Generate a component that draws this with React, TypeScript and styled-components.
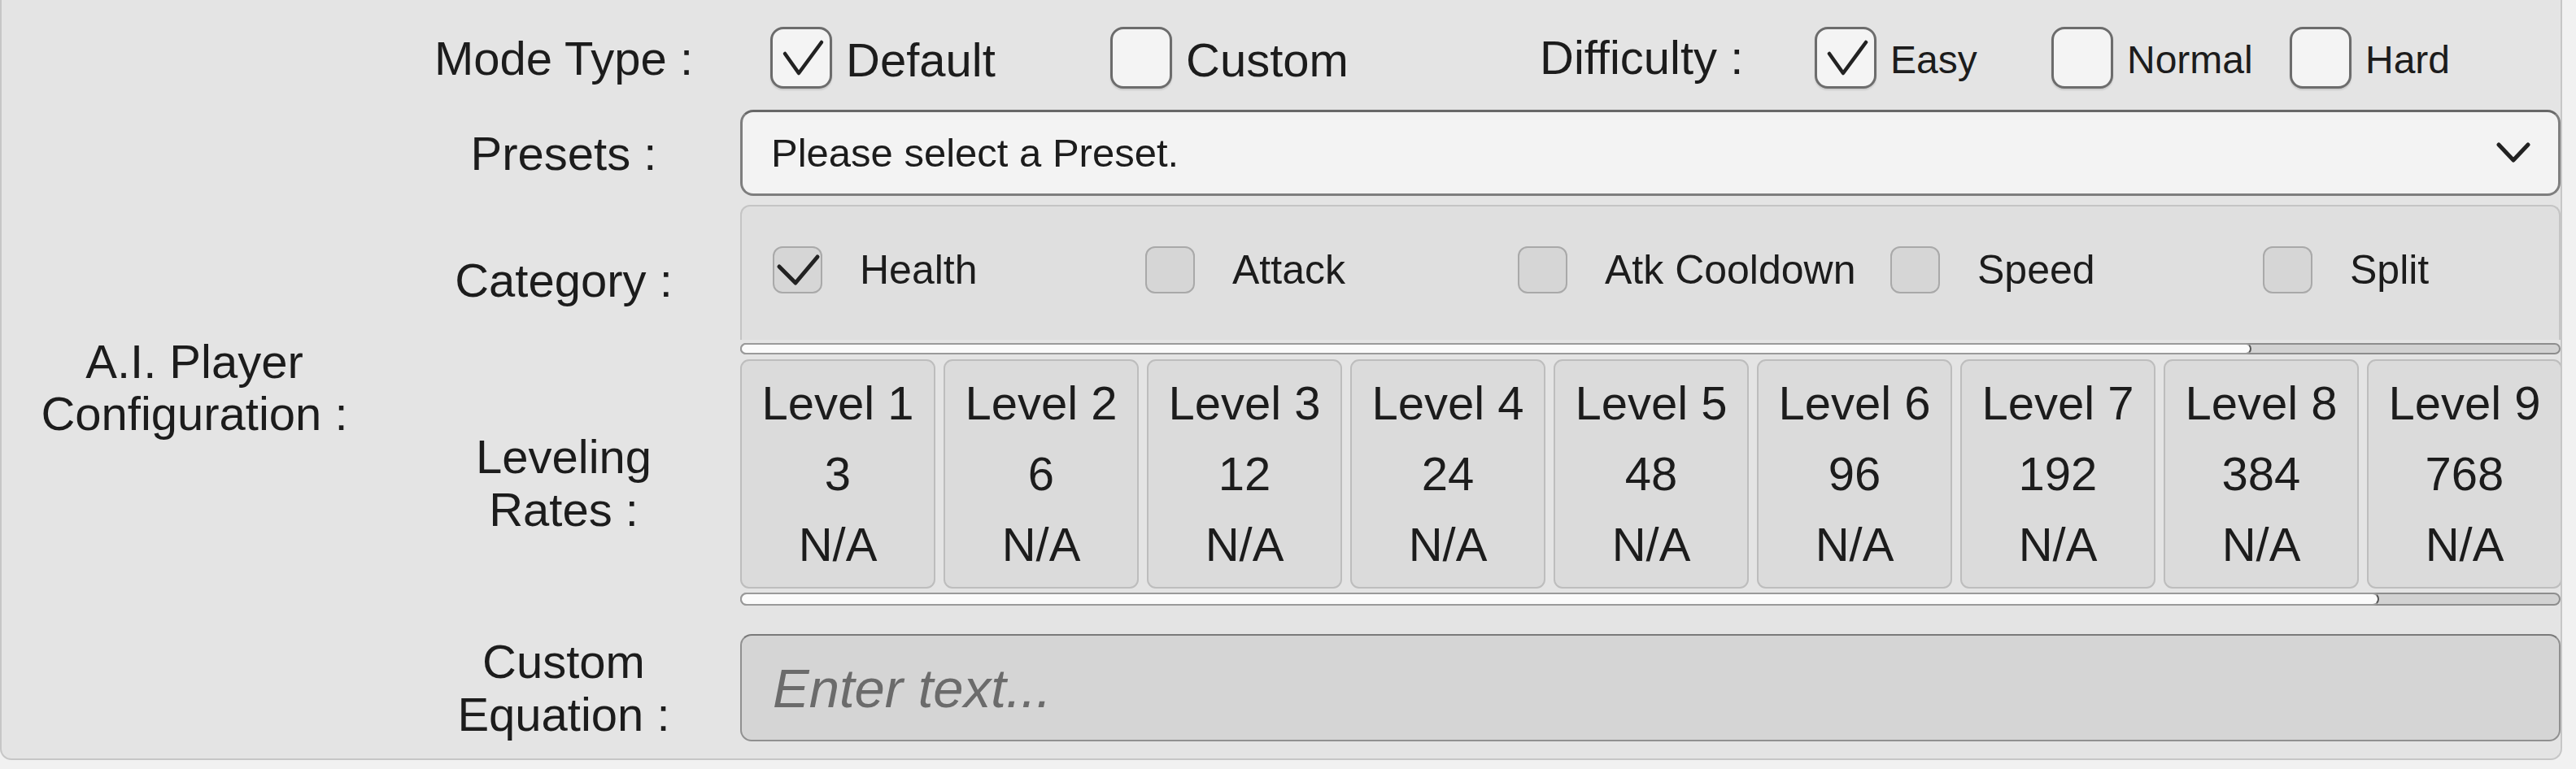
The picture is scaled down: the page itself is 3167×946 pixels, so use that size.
import React from 'react';
import styled, { createGlobalStyle } from 'styled-components';

const GlobalStyle = createGlobalStyle`
  html, body {
    margin: 0;
    padding: 0;
    background: #f1f1f1;
  }
  body {
    font-family: "Liberation Sans", Arial, sans-serif;
    color: #1c1c1c;
  }
`;

const Panel = styled.div`
  width: 3150px;
  box-sizing: border-box;
  display: flex;
  padding: 33px 0 21px 0;
  background: #e4e4e4;
  border: 2px solid #c6c6c6;
  border-top: none;
  border-radius: 0 0 14px 14px;
`;

const Title = styled.div`
  width: 474px;
  flex-shrink: 0;
  display: flex;
  align-items: center;
  justify-content: center;
  padding-top: 8px;
  text-align: center;
  font-size: 58px;
  line-height: 64px;
`;

const Rows = styled.div`
  flex: 1;
  display: flex;
  flex-direction: column;
  min-width: 0;
`;

const Row = styled.div<{ $top: number }>`
  display: grid;
  grid-template-columns: 434px minmax(0, 1fr);
  align-items: center;
  margin-top: ${p => p.$top}px;
`;

const RowLabel = styled.div`
  text-align: center;
  font-size: 58px;
  line-height: 65px;
`;

const ToggleRow = styled.div`
  display: flex;
  align-items: center;
  height: 76px;
  padding-left: 37px;
`;

const ToggleItem = styled.div<{ $w: number }>`
  width: ${p => p.$w}px;
  flex-shrink: 0;
  display: flex;
  align-items: center;
  gap: 17px;
`;

const ToggleText = styled.span<{ $size: number }>`
  font-size: ${p => p.$size}px;
  line-height: 1;
  padding-top: 6px;
`;

const BigBox = styled.div`
  width: 76px;
  height: 76px;
  box-sizing: border-box;
  flex-shrink: 0;
  border: 3px solid #6c6c6c;
  border-radius: 16px;
  background: #f4f4f4;
  box-shadow: 0 2px 2px rgba(0, 0, 0, 0.12);
  display: flex;
  align-items: center;
  justify-content: center;
`;

const InlineLabel = styled.div<{ $w: number }>`
  width: ${p => p.$w}px;
  flex-shrink: 0;
  font-size: 58px;
  line-height: 1;
`;

const Dropdown = styled.div`
  height: 106px;
  box-sizing: border-box;
  display: flex;
  align-items: center;
  justify-content: space-between;
  padding: 0 34px 0 35px;
  background: #f3f3f3;
  border: 3px solid #7e7e7e;
  border-top-color: #686868;
  border-radius: 16px;
  font-size: 49px;
`;

const ScrollView = styled.div<{ $gap: number }>`
  display: flex;
  flex-direction: column;
  gap: ${p => p.$gap}px;
  min-width: 0;
`;

const CategoryViewport = styled.div`
  height: 166px;
  box-sizing: border-box;
  overflow: hidden;
  background: #dfdfdf;
  border: 2px solid #c4c4c4;
  border-bottom: none;
  border-radius: 12px 12px 0 0;
`;

const CategoryList = styled.div`
  display: flex;
  padding: 49px 0 0 38px;
`;

const CategoryItem = styled.div`
  width: 458px;
  flex-shrink: 0;
  display: flex;
  align-items: center;
  gap: 46px;
  font-size: 50px;
  line-height: 1;
`;

const SmallBox = styled.div`
  width: 61px;
  height: 58px;
  box-sizing: border-box;
  flex-shrink: 0;
  background: #d6d6d6;
  border: 2px solid #a9a9a9;
  border-radius: 12px;
  display: flex;
  align-items: center;
  justify-content: center;
`;

const Track = styled.div<{ $h: number }>`
  height: ${p => p.$h}px;
  box-sizing: border-box;
  display: flex;
  background: #d2d2d2;
  border: 2px solid #8d8d8d;
  border-radius: 10px;
`;

const Thumb = styled.div<{ $fill: number }>`
  width: ${p => p.$fill * 100}%;
  margin: -2px 0 -2px -2px;
  background: #fbfbfb;
  border: 2px solid #9a9a9a;
  border-right-color: #555;
  border-radius: 10px;
`;

const LevelViewport = styled.div`
  height: 282px;
  overflow: hidden;
  display: flex;
  gap: 10px;
`;

const LevelCell = styled.div`
  width: 240px;
  flex-shrink: 0;
  box-sizing: border-box;
  display: flex;
  flex-direction: column;
  align-items: center;
  padding-top: 8px;
  background: #dbdbdb;
  border: 2px solid #bdbdbd;
  border-radius: 11px;
  font-size: 58px;
  line-height: 87px;
`;

const TextInput = styled.input`
  height: 132px;
  width: 100%;
  box-sizing: border-box;
  padding: 0 0 0 38px;
  background: #d5d5d5;
  border: 2px solid #909090;
  border-top-color: #7a7a7a;
  border-radius: 14px;
  outline: none;
  font-family: "Liberation Sans", Arial, sans-serif;
  font-style: italic;
  font-size: 67px;
  color: #333;
  &::placeholder {
    color: #6b6b6b;
  }
`;

function Check({ size }: { size: 'big' | 'small' }) {
  if (size === 'big') {
    return (
      <svg width="70" height="70" viewBox="0 0 70 70">
        <polyline points="15,30 32,54 60,16" fill="none" stroke="#222" strokeWidth="4.5" strokeLinecap="round" strokeLinejoin="round" />
      </svg>
    );
  }
  return (
    <svg width="57" height="54" viewBox="0 0 57 54">
      <polyline points="6,23 26,43 53,11" fill="none" stroke="#222" strokeWidth="5" strokeLinecap="round" strokeLinejoin="round" />
    </svg>
  );
}

function Toggle(props: { label: string; checked?: boolean; width: number; text: number }) {
  return (
    <ToggleItem $w={props.width}>
      <BigBox>{props.checked && <Check size="big" />}</BigBox>
      <ToggleText $size={props.text}>{props.label}</ToggleText>
    </ToggleItem>
  );
}

function Scrollbar(props: { fill: number; height: number }) {
  return (
    <Track $h={props.height}>
      <Thumb $fill={props.fill} />
    </Track>
  );
}

const categories = [
  { name: 'Health', checked: true },
  { name: 'Attack', checked: false },
  { name: 'Atk Cooldown', checked: false },
  { name: 'Speed', checked: false },
  { name: 'Split', checked: false },
];

const levels = [1, 2, 3, 4, 5, 6, 7, 8, 9];

export default function App() {
  return (
    <>
      <GlobalStyle />
      <Panel>
        <Title>
          A.I. Player
          <br />
          Configuration :
        </Title>
        <Rows>
          <Row $top={0}>
            <RowLabel>Mode Type :</RowLabel>
            <ToggleRow>
              <Toggle label="Default" checked width={418} text={58} />
              <Toggle label="Custom" width={528} text={58} />
              <InlineLabel $w={338}>Difficulty :</InlineLabel>
              <Toggle label="Easy" checked width={291} text={48} />
              <Toggle label="Normal" width={293} text={48} />
              <Toggle label="Hard" width={200} text={48} />
            </ToggleRow>
          </Row>

          <Row $top={26}>
            <RowLabel>Presets :</RowLabel>
            <Dropdown>
              <span>Please select a Preset.</span>
              <svg width="42" height="26" viewBox="0 0 42 26">
                <polyline points="3,3 21,22 39,3" fill="none" stroke="#222" strokeWidth="5" strokeLinecap="round" strokeLinejoin="round" />
              </svg>
            </Dropdown>
          </Row>

          <Row $top={11}>
            <RowLabel>Category :</RowLabel>
            <ScrollView $gap={4}>
              <CategoryViewport>
                <CategoryList>
                  {categories.map(c => (
                    <CategoryItem key={c.name}>
                      <SmallBox>{c.checked && <Check size="small" />}</SmallBox>
                      <span>{c.name}</span>
                    </CategoryItem>
                  ))}
                </CategoryList>
              </CategoryViewport>
              <Scrollbar fill={0.83} height={14} />
            </ScrollView>
          </Row>

          <Row $top={6}>
            <RowLabel>
              Leveling
              <br />
              Rates :
            </RowLabel>
            <ScrollView $gap={5}>
              <LevelViewport>
                {levels.map(n => (
                  <LevelCell key={n}>
                    <span>Level {n}</span>
                    <span>{3 * Math.pow(2, n - 1)}</span>
                    <span>N/A</span>
                  </LevelCell>
                ))}
              </LevelViewport>
              <Scrollbar fill={0.9} height={16} />
            </ScrollView>
          </Row>

          <Row $top={35}>
            <RowLabel>
              Custom
              <br />
              Equation :
            </RowLabel>
            <TextInput placeholder="Enter text..." />
          </Row>
        </Rows>
      </Panel>
    </>
  );
}
